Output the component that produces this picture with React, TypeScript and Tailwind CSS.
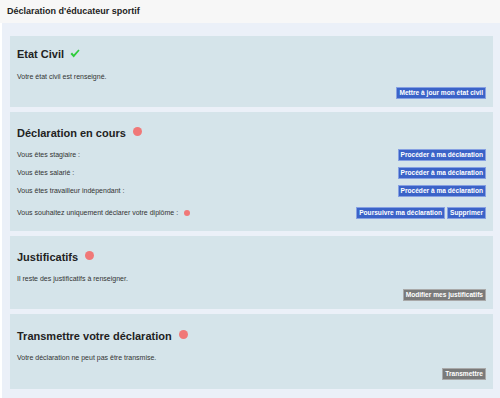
import type { ReactNode } from 'react';

const font = { fontFamily: '"Liberation Sans", Arial, sans-serif' };

function Btn({ children, grey }: { children: ReactNode; grey?: boolean }) {
  return (
    <button
      className={
        grey
          ? 'h-[12px] px-[2px] flex items-center border border-[#a9a9a9] bg-[#7a7a7a] text-white font-bold text-[6.6px] leading-none whitespace-nowrap'
          : 'h-[12px] px-[2px] flex items-center border border-[#86a0e2] bg-[#3b63c8] text-white font-bold text-[6.6px] leading-none whitespace-nowrap'
      }
    >
      {children}
    </button>
  );
}

function Dot({ small }: { small?: boolean }) {
  return (
    <span
      className={
        small
          ? 'inline-block w-[6px] h-[6px] rounded-full bg-[#f07878] ml-[6px]'
          : 'inline-block w-[9px] h-[9px] rounded-full bg-[#f07878] ml-[7px] -mt-[3px]'
      }
    />
  );
}

function Check() {
  return (
    <svg width="10" height="9" viewBox="0 0 10 9" className="ml-[6px] -mt-[1px]">
      <path d="M0.5 5 L2.1 3.5 L3.7 5.4 L8.4 0.4 L9.6 1.6 L3.7 8.4 Z" fill="#2fcc3c" />
    </svg>
  );
}

function Title({ children }: { children: ReactNode }) {
  return (
    <div className="h-[14px] flex items-center text-[11px] font-bold text-[#222] leading-none">
      {children}
    </div>
  );
}

function Row({ label, children, dot }: { label: string; children: ReactNode; dot?: boolean }) {
  return (
    <div className="h-[12px] flex items-center justify-between">
      <div className="flex items-center text-[7px] text-[#333]">
        {label}
        {dot && <Dot small />}
      </div>
      <div className="flex gap-[2px]">{children}</div>
    </div>
  );
}

export default function App() {
  return (
    <div className="w-[500px] h-[398px] bg-white overflow-hidden" style={font}>
      <div className="h-[23px] bg-[#f7f7f7] px-[7px] flex items-center text-[9px] font-bold text-[#222]">
        Déclaration d'éducateur sportif
      </div>
      <div className="ml-[2px] bg-[#ebf0f8] pt-[13px] pl-[8px] pr-[7px] pb-[10px] flex flex-col gap-[5px]">
        {/* Etat civil */}
        <div className="bg-[#d5e4ea] px-[7px] pt-[11px] pb-[8px]">
          <Title>
            Etat Civil <Check />
          </Title>
          <p className="mt-[11px] h-[10px] leading-[10px] text-[7px] text-[#333]">Votre état civil est renseigné.</p>
          <div className="mt-[5px] flex justify-end">
            <Btn>Mettre à jour mon état civil</Btn>
          </div>
        </div>

        {/* Déclaration en cours */}
        <div className="bg-[#d5e4ea] px-[7px] pt-[14px] pb-[12px]">
          <Title>
            Déclaration en cours <Dot />
          </Title>
          <div className="mt-[9px] flex flex-col gap-[6px]">
            <Row label="Vous êtes stagiaire :">
              <Btn>Procéder à ma déclaration</Btn>
            </Row>
            <Row label="Vous êtes salarié :">
              <Btn>Procéder à ma déclaration</Btn>
            </Row>
            <Row label="Vous êtes travailleur indépendant :">
              <Btn>Procéder à ma déclaration</Btn>
            </Row>
            <div className="mt-[4px]">
              <Row label="Vous souhaitez uniquement déclarer votre diplôme :" dot>
                <Btn>Poursuivre ma déclaration</Btn>
                <Btn>Supprimer</Btn>
              </Row>
            </div>
          </div>
        </div>

        {/* Justificatifs */}
        <div className="bg-[#d5e4ea] px-[7px] pt-[14px] pb-[8px]">
          <Title>
            Justificatifs <Dot />
          </Title>
          <p className="mt-[10px] h-[10px] leading-[10px] text-[7px] text-[#333]">Il reste des justificatifs à renseigner.</p>
          <div className="mt-[5px] flex justify-end">
            <Btn grey>Modifier mes justificatifs</Btn>
          </div>
        </div>

        {/* Transmettre */}
        <div className="bg-[#d5e4ea] px-[7px] pt-[15px] pb-[9px]">
          <Title>
            Transmettre votre déclaration <Dot />
          </Title>
          <p className="mt-[10px] h-[10px] leading-[10px] text-[7px] text-[#333]">Votre déclaration ne peut pas être transmise.</p>
          <div className="mt-[5px] flex justify-end">
            <Btn grey>Transmettre</Btn>
          </div>
        </div>
      </div>
    </div>
  );
}
